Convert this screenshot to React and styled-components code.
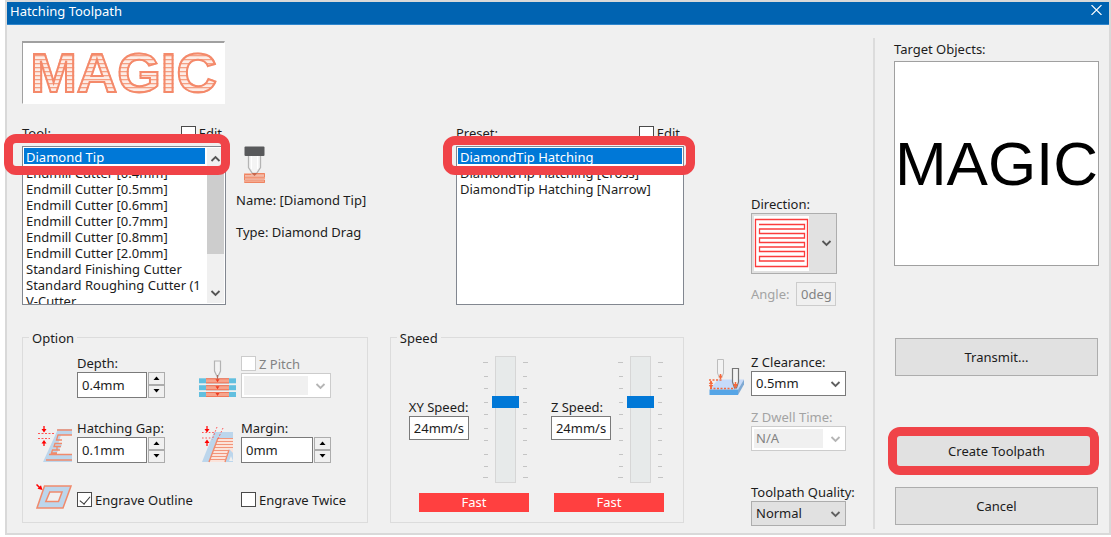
import React, { useState } from 'react'
import styled, { createGlobalStyle, css } from 'styled-components'

const colors = {
  face: '#f0f0f0',
  titlebar: '#0063b1',
  accent: '#0078d7',
  marker: '#f04348',
  fast: '#ff4040',
  text: '#1c1c1c',
  disabled: '#a3a3a3',
  border: '#7a7a7a',
  softBorder: '#cccccc',
  group: '#dcdcdc',
  orange: '#f08a6c',
  blue: '#bcd6ec',
}

const GlobalStyle = createGlobalStyle`
  * {
    box-sizing: border-box;
  }
  body {
    margin: 0;
    background: #fff;
    color: ${colors.text};
    font: 13px/16px "Noto Sans", "Liberation Sans", sans-serif;
  }
  button, input, select {
    margin: 0;
    font: inherit;
    color: inherit;
  }
  svg {
    display: block;
    flex: none;
  }
`

const Page = styled.div`
  padding: 0 0 3px 5px;
`
const Dialog = styled.main`
  border: 2px solid #d9d9d9;
`
const TitleBar = styled.header`
  display: flex;
  justify-content: space-between;
  height: 23px;
  padding: 0 7px 0 3px;
  border-bottom: 1px solid #2f86cd;
  background: ${colors.titlebar};
  color: #fff;
`
const Title = styled.h1`
  margin: 0;
  font-size: 13px;
  font-weight: 400;
  line-height: 18px;
`
const CloseButton = styled.button`
  display: flex;
  align-items: flex-start;
  padding: 3px 0;
  border: 0;
  background: none;
`
const Body = styled.div`
  display: flex;
  padding: 13px 10px 4px 15px;
  background: ${colors.face};
`
const Main = styled.div`
  display: grid;
  flex: 1;
  grid-template-columns: 1fr 189px;
  row-gap: 24px;
  align-items: start;
  padding: 3px 0 3px;
`
const Side = styled.aside`
  display: flex;
  flex-direction: column;
  width: 226px;
  padding: 2px 0 4px 19px;
  border-left: 2px solid ${colors.group};
`
const Preview = styled.div`
  display: flex;
  align-items: center;
  justify-content: center;
  width: 203px;
  height: 63px;
  margin-bottom: 21px;
  border: 1px solid #fff;
  border-top: 2px solid #a0a0a0;
  border-left-color: #a0a0a0;
  background: #fff;
`
const HatchedText = styled.span`
  font: bold 56px/60px "Liberation Sans", Arial, sans-serif;
  color: transparent;
  background: repeating-linear-gradient(#f4a083 0 1px, #fbd5c8 1px 2px, #fdece6 2px 4px);
  background-clip: text;
  -webkit-text-stroke: 2px #f4896a;
`
const Row = styled.div`
  display: flex;
`
const ToolColumn = styled.div`
  width: 204px;
`
const PresetColumn = styled.div`
  align-self: flex-end;
  width: 228px;
`
const ListHeader = styled.div`
  display: flex;
  justify-content: space-between;
  align-items: center;
  height: 16px;
  margin-bottom: 5px;
  padding-right: 4px;
`
const ListFrame = styled.div`
  position: relative;
  display: flex;
  height: 159px;
  border: 1px solid #828790;
  background: #fff;
`
const ListBox = styled.select`
  flex: 1;
  min-width: 0;
  height: 100%;
  padding: 1px;
  border: 0;
  outline: 0;
  background: none;
  overflow: hidden;

  option {
    height: 16px;
    min-height: 16px;
    padding: 0 2px;
    line-height: 16px;
    color: ${colors.text};
  }
  option:checked {
    background: ${colors.accent} linear-gradient(${colors.accent}, ${colors.accent});
    color: #fff;
    -webkit-text-fill-color: #fff;
  }
`
const ScrollBar = styled.div`
  display: flex;
  flex-direction: column;
  width: 17px;
  margin: 1px;
  background: ${colors.face};
`
const ScrollButton = styled.button`
  display: flex;
  align-items: center;
  justify-content: center;
  height: 20px;
  padding: 0;
  border: 0;
  background: none;
`
const ScrollThumb = styled.div`
  height: 86px;
  margin-bottom: auto;
  background: #cdcdcd;
`
const Marker = styled.div`
  position: absolute;
  border: 9px solid ${colors.marker};
  border-radius: 12px;
  pointer-events: none;
`
const ToolMarker = styled(Marker)`
  top: -13px;
  left: -19px;
  right: -5px;
  height: 41px;
`
const PresetMarker = styled(Marker)`
  top: -11px;
  left: -14px;
  right: -12px;
  height: 39px;
`
const ButtonMarker = styled(Marker)`
  inset: -6px -2px -6px -8px;
`
const ToolInfo = styled.div`
  flex: 1;
  padding: 105px 0 0 10px;

  p {
    margin: 8px 0 16px;
  }
  svg {
    margin-left: 7px;
  }
`
const Label = styled.label`
  display: block;
  line-height: 18px;
  white-space: nowrap;
  color: ${p => (p.$disabled ? colors.disabled : 'inherit')};
`
const CheckLabel = styled.label`
  display: flex;
  align-items: center;
  gap: 3px;
  height: 18px;
  white-space: nowrap;
  color: ${p => (p.$disabled ? '#838383' : 'inherit')};
`
const CheckBox = styled.input`
  position: relative;
  appearance: none;
  width: 15px;
  height: 15px;
  border: 1px solid #4a4a4a;
  background: #fff;

  &:disabled {
    border-color: ${colors.softBorder};
  }
  &:checked::after {
    content: '';
    position: absolute;
    top: 1px;
    left: 4px;
    width: 5px;
    height: 9px;
    border: solid #333;
    border-width: 0 1px 1px 0;
    transform: rotate(40deg);
  }
`
const TextInput = styled.input`
  width: ${p => p.$width || '100%'};
  min-width: 0;
  height: ${p => p.$height || '24px'};
  padding: 0 4px;
  border: 1px solid ${colors.border};
  background: #fff;

  &:disabled {
    border-color: ${colors.softBorder};
    background: ${colors.face};
    color: #838383;
  }
`
const SpinBox = styled.div`
  display: flex;
  gap: 1px;
  width: ${p => p.$width}px;
  height: 26px;
`
const SpinButtons = styled.div`
  display: flex;
  flex: none;
  flex-direction: column;
  width: 17px;
`
const SpinButton = styled.button`
  display: flex;
  flex: 1;
  align-items: center;
  justify-content: center;
  padding: 0;
  border: 1px solid #acacac;
  background: ${colors.face};
`
const SelectFrame = styled.div`
  position: relative;
  width: ${p => p.$width}px;
  margin-bottom: ${p => p.$space || 0}px;

  svg {
    position: absolute;
    top: 10px;
    right: 5px;
    pointer-events: none;
  }
`
const Select = styled.select`
  appearance: none;
  display: block;
  width: 100%;
  height: 25px;
  padding: 0 22px 0 4px;
  border: 1px solid ${colors.border};
  border-radius: 0;
  background: #fff;

  ${p => p.$flat && css`
    border-color: #adadad;
    background: #e1e1e1;
  `}
  &:disabled {
    border-color: ${colors.softBorder};
    background: #fff linear-gradient(${colors.face}, ${colors.face}) no-repeat 2px 2px / calc(100% - 24px) calc(100% - 4px);
    color: #838383;
    opacity: 1;
  }
`
const Group = styled.fieldset`
  min-width: 0;
  height: 193px;
  margin: 0;
  padding: 0;
  border: 1px solid ${colors.group};

  legend {
    height: 16px;
    margin-left: 6px;
    padding: 0 3px;
  }
`
const OptionGroup = styled(Group)`
  flex: 346;
  margin-right: 22px;
`
const SpeedGroup = styled(Group)`
  flex: 294;
`
const OptionGrid = styled.div`
  display: grid;
  grid-template-columns: 36px 117px 37px 1fr;
  grid-template-rows: 44px 44px 25px;
  column-gap: 5px;
  row-gap: 21px;
  align-items: end;
  padding: 8px 0 0 13px;
`
const SpeedRow = styled.div`
  display: flex;
  gap: 22px;
  padding: 10px 19px 0 18px;
`
const SpeedUnit = styled.div`
  display: flex;
  flex: ${p => p.$grow};
  flex-wrap: wrap;
  justify-content: space-between;
  min-width: 0;
`
const SpeedValue = styled.div`
  width: 60px;
  padding-top: 42px;
`
const SliderBox = styled.div`
  display: flex;
  justify-content: space-between;
  width: 39px;
  height: 127px;
  margin-right: 4px;
`
const Ticks = styled.svg`
  margin: 0 -3px;
`
const Slider = styled.input`
  appearance: none;
  writing-mode: vertical-lr;
  direction: rtl;
  width: 27px;
  height: 127px;
  background: none;

  &::-webkit-slider-runnable-track {
    width: 21px;
    height: 127px;
    margin: 0 auto;
    border: 1px solid #d6d6d6;
    background: #e7eaea;
  }
  &::-webkit-slider-thumb {
    appearance: none;
    width: 27px;
    height: 12px;
    margin-left: -4px;
    background: ${colors.accent};
  }
`
const FastBar = styled.div`
  width: 110px;
  height: 19px;
  margin: 10px 0 0 auto;
  background: ${colors.fast};
  color: #fff;
  line-height: 18px;
  text-align: center;
`
const DirectionPanel = styled.div`
  align-self: end;
  padding-left: 67px;
`
const DirectionButton = styled.button`
  display: flex;
  align-items: center;
  justify-content: space-between;
  width: 86px;
  height: 61px;
  padding: 0 4px 0 2px;
  border: 1px solid #adadad;
  background: #e1e1e1;
`
const AngleRow = styled.div`
  display: flex;
  justify-content: space-between;
  align-items: center;
  width: 85px;
  margin-top: 8px;
`
const QualityPanel = styled.div`
  display: flex;
  gap: 6px;
  padding: 23px 0 0 24px;

  > svg {
    margin-top: 5px;
  }
`
const TargetBox = styled.div`
  display: flex;
  align-items: center;
  justify-content: center;
  height: 205px;
  margin: 3px 0 72px;
  border: 1px solid #a0a0a0;
  background: #fff;
  font: 62px/72px "Liberation Sans", Arial, sans-serif;
  color: #000;
`
const Button = styled.button`
  position: relative;
  height: 38px;
  margin: 0 1px ${p => p.$space || 0}px;
  border: 1px solid #adadad;
  background: #e1e1e1;
`

const Chevron = ({ color = '#555', up = false }) => (
  <svg width="11" height="7" viewBox="0 0 11 7" fill="none" stroke={color} strokeWidth="1.8">
    <path d={up ? 'M1.500 6L5.500 2L9.500 6' : 'M1.500 1L5.500 5L9.500 1'} />
  </svg>
)

const Triangle = ({ up }) => (
  <svg width="7" height="4" viewBox="0 0 7 4">
    <path d={up ? 'M0.5 4L3.5 0.5L6.5 4Z' : 'M0.5 0L3.5 3.5L6.5 0Z'} fill="#000" />
  </svg>
)

const CloseIcon = () => (
  <svg width="11" height="10" viewBox="0 0 11 10" stroke="#fff" strokeWidth="1.1">
    <path d="M0.5 0L10.5 10M10.5 0L0.5 10" />
  </svg>
)

const DiamondIcon = () => (
  <svg width="23" height="38" viewBox="0 0 23 38" fill="none">
    <path d="M1 28.5H22M1 32H22M1 35.5H22" stroke="#f5a98f" strokeWidth="2.6" />
    <path d="M5.500 10V21.500L9.500 27.500H13.500L17.500 21.500V10" fill="#f4f4f4" stroke="#b4b4b4" strokeWidth="1.3" />
    <path d="M8.500 10V23M14.500 10V23" stroke="#fff" />
    <path d="M8.500 27H14.500L11.500 30Z" fill="#c8674b" />
    <path d="M14 27.500H21.500V31H1.500V34H21.500V36.500H1.500M1.500 31V28.500H8" stroke="#ee8462" />
    <rect x="1.500" y="0.500" width="20" height="9.500" rx="1" fill="#58595b" />
  </svg>
)

const PitchIcon = () => (
  <svg width="37" height="38" viewBox="0 0 37 38" fill="none">
    {[18.3, 25.2, 32].map(y => (
      <g key={y}>
        <rect x="0" y={y} width="37" height="5" fill="#62bfdf" />
        <rect x="7" y={y} width="23" height="5" fill="#f6a48c" />
        <path d={`M7 ${y + 0.5}H30M7 ${y + 4.5}H30`} stroke="#f1775a" />
        <path d={`M16.500 ${y + 1}H20.500L18.500 ${y + 4}Z`} fill="#ee3a20" />
      </g>
    ))}
    <path d="M15.500 1H21.500V11L18.500 17.500L15.500 11Z" fill="#f3f3f3" stroke="#b3b3b3" strokeWidth="1.2" />
    <path d="M18.500 15V19" stroke="#b06b5c" />
  </svg>
)

const GapIcon = () => (
  <svg width="36" height="38" viewBox="0 0 36 38" fill="none">
    <path d="M22 4H36V10H25L22.500 18L26 20L20 29H36V37H7Z" fill={colors.blue} />
    <path
      d="M21 5H36M36 10H22L20.500 15H26M26 18.500H19L18 21.500H25M24 25H16.500L15.500 28H21M21 24.500V21.500M13 29.500H36M10 35H36"
      stroke={colors.orange}
      strokeWidth="1.3"
    />
    <path d="M2 8.500H18M2 13.500H14" stroke="#f55" strokeDasharray="2 1.5" />
    <path d="M8 1V5M8 17V21" stroke="#f22" strokeWidth="1.5" />
    <path d="M5.500 4H10.500L8 7.500ZM5.500 18.500H10.500L8 15Z" fill="#f00" />
  </svg>
)

const MarginIcon = () => (
  <svg width="34" height="38" viewBox="0 0 34 38" fill="none">
    <path d="M15 7H34V37H3Z" fill={colors.blue} />
    <path d="M19 13H34V29L30 24L26 37H10Z" fill="#fbe3da" />
    <path
      d="M19 13.500H34M17.500 16.500H34M16.500 19.500H34M15.500 22.500H34M14 25.500H29M13 28.500H28M12 31.500H27M11 34.500H26"
      stroke="#f2957a"
      strokeWidth="1.2"
    />
    <path d="M19 13L10 37M30 25L26 37" stroke={colors.orange} strokeWidth="1.4" />
    <path d="M34 28L31 25L27 37H34Z" fill={colors.blue} />
    <path d="M30 36L32 31L34 36Z" fill="#f0f0f0" />
    <path d="M3 7.500H15M3 13H13M18 2L13 15M24 3L19 14" stroke="#f55" strokeDasharray="1.6 1.800" />
    <path d="M8 1V5M8 17V21" stroke="#f22" strokeWidth="1.4" />
    <path d="M5.500 4H10.500L8 7.500ZM5.500 18H10.500L8 14.500Z" fill="#f00" />
  </svg>
)

const OutlineIcon = () => (
  <svg width="36" height="25" viewBox="0 0 36 25" fill="none">
    <path
      d="M8.500 2H35L27 24H1Z M13.800 8L9.800 17.500H22.500L26 8Z"
      fill={colors.blue}
      fillRule="evenodd"
      stroke={colors.orange}
      strokeWidth="1.500"
    />
    <path d="M0.500 0.500L4 4" stroke="#f00" strokeWidth="1.500" />
    <path d="M6.500 6L1.500 4.800L5 1.300Z" fill="#f00" />
  </svg>
)

const ClearanceIcon = () => (
  <svg width="37" height="38" viewBox="0 0 37 38" fill="none">
    <path d="M10 21.500H36L30 31.500H1.500Z" fill="#c6dafa" />
    <path d="M1.500 31.500H30V37H1.500Z" fill="#56a5e6" />
    <path d="M36 21.500V26.500L30 37V31.500Z" fill="#7ea9d4" />
    <path d="M9.500 1.500H15.500V15L14 19H11L9.500 15Z" fill="#f3f3f3" stroke="#bdbdbd" />
    <path d="M24.500 10.500H30.500V24L28.500 30H26.500L24.500 24Z" fill="#f3f3f3" stroke="#757575" strokeWidth="1.2" />
    <path d="M12.500 16V21M27.500 24V30" stroke="#f4693e" strokeWidth="1.500" />
    <path d="M10.500 19.500L12.500 16L14.500 19.500ZM25 26L27.500 30.500L30 26Z" fill="#f4693e" />
    <path d="M1 22H14M2 30.500H27" stroke="#f4693e" strokeWidth="1.500" strokeDasharray="2 1.500" />
    <path d="M3 23V30" stroke="#f4693e" strokeWidth="1.500" />
    <path d="M0.800 26L3 22.500L5.200 26ZM0.800 27L3 30.500L5.200 27Z" fill="#f4693e" />
  </svg>
)

const DirectionIcon = () => (
  <svg width="55" height="55" viewBox="0 0 55 55" fill="none" stroke="#fb3c3c" strokeWidth="1.300">
    <rect width="55" height="55" fill="#fff" stroke="none" />
    <path d="M1.500 3.500H53.500V50.500H1.500Z" />
    <path d="M5 8.500H50.500V13H5.500V17.500H50.500V22H5.500V26.500H50.500V31H5.500V35.500H50.500V40.500H5.500V45H50.500" />
  </svg>
)

const TickMarks = ({ right }) => (
  <Ticks width="6" height="127" viewBox="0 0 6 127" stroke="#c4c4c4">
    {[6, 20, 32, 46, 58, 72, 84, 98, 110, 121].map((y, i) => {
      const long = i === 0 || i === 9
      const x1 = right ? 1 : long ? 0 : 1
      const x2 = right ? (long ? 6 : 5) : 5
      return <path key={y} d={`M${x1} ${y + 0.5}H${x2}`} />
    })}
  </Ticks>
)

const tools = [
  'Diamond Tip',
  'Endmill Cutter [0.4mm]',
  'Endmill Cutter [0.5mm]',
  'Endmill Cutter [0.6mm]',
  'Endmill Cutter [0.7mm]',
  'Endmill Cutter [0.8mm]',
  'Endmill Cutter [2.0mm]',
  'Standard Finishing Cutter',
  'Standard Roughing Cutter (1',
  'V-Cutter',
]

const presets = [
  'DiamondTip Hatching',
  'DiamondTip Hatching [Cross]',
  'DiamondTip Hatching [Narrow]',
]

const Check = ({ children, disabled, defaultChecked }) => (
  <CheckLabel $disabled={disabled}>
    <CheckBox type="checkbox" disabled={disabled} defaultChecked={defaultChecked} />
    {children}
  </CheckLabel>
)

const Spin = ({ id, label, value, width = 88 }) => (
  <div>
    <Label htmlFor={id}>{label}</Label>
    <SpinBox $width={width}>
      <TextInput id={id} defaultValue={value} $height="26px" />
      <SpinButtons>
        <SpinButton type="button" aria-label="Increase"><Triangle up /></SpinButton>
        <SpinButton type="button" aria-label="Decrease"><Triangle /></SpinButton>
      </SpinButtons>
    </SpinBox>
  </div>
)

const DropDown = ({ id, label, value, disabled, flat, width = 95, space }) => (
  <SelectFrame $width={width} $space={space}>
    <Select id={id} aria-label={label} disabled={disabled} $flat={flat}>
      <option>{value}</option>
    </Select>
    <Chevron color={disabled ? '#b5b5b5' : '#606060'} />
  </SelectFrame>
)

const Speed = ({ id, label, grow }) => {
  const [level, setLevel] = useState(65)
  return (
    <SpeedUnit $grow={grow}>
      <SpeedValue>
        <Label htmlFor={id}>{label}</Label>
        <TextInput id={id} defaultValue="24mm/s" />
      </SpeedValue>
      <SliderBox>
        <TickMarks />
        <Slider
          type="range"
          aria-label={label}
          value={level}
          onChange={e => setLevel(Number(e.target.value))}
        />
        <TickMarks right />
      </SliderBox>
      <FastBar>Fast</FastBar>
    </SpeedUnit>
  )
}

const App = () => {
  const [tool, setTool] = useState(tools[0])
  const [preset, setPreset] = useState(presets[0])

  return (
    <Page>
      <GlobalStyle />
      <Dialog>
        <TitleBar>
          <Title>Hatching Toolpath</Title>
          <CloseButton type="button" aria-label="Close"><CloseIcon /></CloseButton>
        </TitleBar>
        <Body>
          <Main>
            <Row>
              <ToolColumn>
                <Preview><HatchedText>MAGIC</HatchedText></Preview>
                <ListHeader>
                  <Label htmlFor="tool">Tool:</Label>
                  <Check>Edit</Check>
                </ListHeader>
                <ListFrame>
                  <ListBox id="tool" size={10} value={tool} onChange={e => setTool(e.target.value)}>
                    {tools.map(name => <option key={name}>{name}</option>)}
                  </ListBox>
                  <ScrollBar>
                    <ScrollButton type="button" aria-label="Scroll up"><Chevron up /></ScrollButton>
                    <ScrollThumb />
                    <ScrollButton type="button" aria-label="Scroll down"><Chevron /></ScrollButton>
                  </ScrollBar>
                  <ToolMarker />
                </ListFrame>
              </ToolColumn>
              <ToolInfo>
                <DiamondIcon />
                <p>Name: [Diamond Tip]</p>
                <p>Type: Diamond Drag</p>
              </ToolInfo>
              <PresetColumn>
                <ListHeader>
                  <Label htmlFor="preset">Preset:</Label>
                  <Check>Edit</Check>
                </ListHeader>
                <ListFrame>
                  <ListBox id="preset" size={10} value={preset} onChange={e => setPreset(e.target.value)}>
                    {presets.map(name => <option key={name}>{name}</option>)}
                  </ListBox>
                  <PresetMarker />
                </ListFrame>
              </PresetColumn>
            </Row>

            <DirectionPanel>
              <Label as="div">Direction:</Label>
              <DirectionButton type="button" aria-label="Direction" aria-haspopup="listbox">
                <DirectionIcon />
                <Chevron />
              </DirectionButton>
              <AngleRow>
                <Label htmlFor="angle" $disabled>Angle:</Label>
                <TextInput id="angle" defaultValue="0deg" disabled $width="40px" />
              </AngleRow>
            </DirectionPanel>

            <Row>
              <OptionGroup>
                <legend>Option</legend>
                <OptionGrid>
                  <span />
                  <Spin id="depth" label="Depth:" value="0.4mm" />
                  <PitchIcon />
                  <div>
                    <Check disabled>Z Pitch</Check>
                    <DropDown label="Z Pitch" value="" disabled width={90} />
                  </div>
                  <GapIcon />
                  <Spin id="gap" label="Hatching Gap:" value="0.1mm" />
                  <MarginIcon />
                  <Spin id="margin" label="Margin:" value="0mm" width={90} />
                  <OutlineIcon />
                  <Check defaultChecked>Engrave Outline</Check>
                  <span />
                  <Check>Engrave Twice</Check>
                </OptionGrid>
              </OptionGroup>
              <SpeedGroup>
                <legend>Speed</legend>
                <SpeedRow>
                  <Speed id="xy-speed" label="XY Speed:" grow={120} />
                  <Speed id="z-speed" label="Z Speed:" grow={113} />
                </SpeedRow>
              </SpeedGroup>
            </Row>

            <QualityPanel>
              <ClearanceIcon />
              <div>
                <Label htmlFor="clearance">Z Clearance:</Label>
                <DropDown id="clearance" value="0.5mm" space={12} />
                <Label htmlFor="dwell" $disabled>Z Dwell Time:</Label>
                <DropDown id="dwell" value="N/A" disabled space={32} />
                <Label htmlFor="quality">Toolpath Quality:</Label>
                <DropDown id="quality" value="Normal" flat />
              </div>
            </QualityPanel>
          </Main>

          <Side>
            <Label as="div">Target Objects:</Label>
            <TargetBox>MAGIC</TargetBox>
            <Button type="button" $space={56}>Transmit...</Button>
            <Button type="button" $space={17}>
              Create Toolpath
              <ButtonMarker />
            </Button>
            <Button type="button">Cancel</Button>
          </Side>
        </Body>
      </Dialog>
    </Page>
  )
}

export default App
